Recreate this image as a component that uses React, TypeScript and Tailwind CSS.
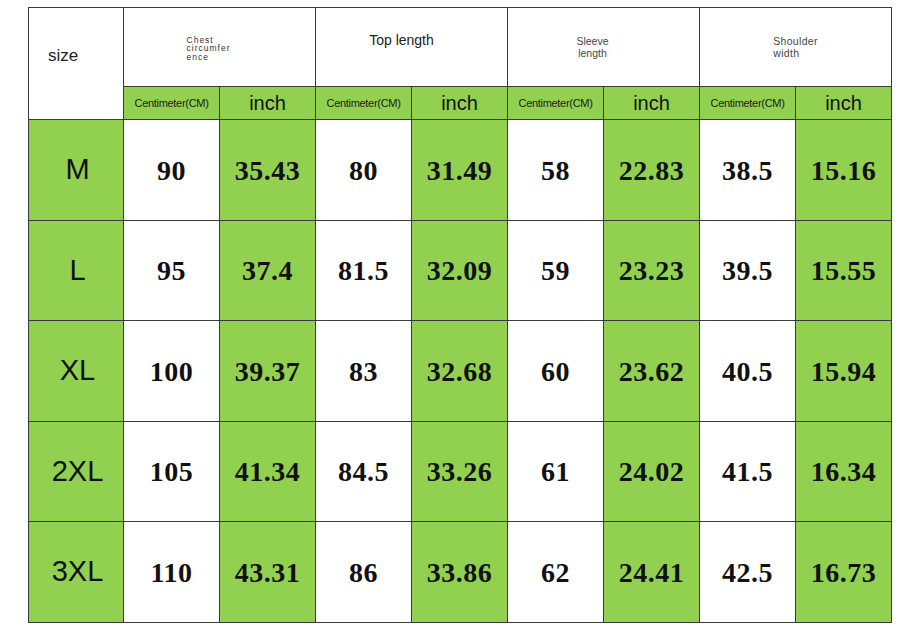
import React from "react";

const rows = [
  { size: "M", vals: ["90", "35.43", "80", "31.49", "58", "22.83", "38.5", "15.16"] },
  { size: "L", vals: ["95", "37.4", "81.5", "32.09", "59", "23.23", "39.5", "15.55"] },
  { size: "XL", vals: ["100", "39.37", "83", "32.68", "60", "23.62", "40.5", "15.94"] },
  { size: "2XL", vals: ["105", "41.34", "84.5", "33.26", "61", "24.02", "41.5", "16.34"] },
  { size: "3XL", vals: ["110", "43.31", "86", "33.86", "62", "24.41", "42.5", "16.73"] },
];

const sans = "font-['Liberation_Sans',Arial,sans-serif]";
const serif = "font-['Liberation_Serif','Times_New_Roman',serif]";

export default function App() {
  return (
    <div className="min-h-[640px] w-full bg-white pl-[28px] pt-[7px]">
      <div className="grid w-fit gap-px bg-[#3a3a3a] p-px grid-cols-[94px_repeat(8,95px)] grid-rows-[78px_32px_100px_99px_100px_99px_100px]">
        {/* header row 1 */}
        <div className={`row-span-2 bg-white flex items-center pl-[19px] pb-[16px] text-[17px] text-[#222] ${sans}`}>
          size
        </div>
        <div className={`col-span-2 bg-white flex items-center justify-center pr-[22px] pt-[3px] ${sans}`}>
          <div className="text-[8.5px] leading-[8.5px] tracking-[1px] text-[#333]">
            Chest
            <br />
            circumfer
            <br />
            ence
          </div>
        </div>
        <div className={`col-span-2 bg-white flex items-center justify-center pr-[20px] pb-[14px] text-[14px] text-[#222] ${sans}`}>
          Top length
        </div>
        <div className={`col-span-2 bg-white flex items-center justify-center pr-[22px] pb-[1px] ${sans}`}>
          <div className="text-[10.5px] leading-[12px] text-[#444] text-center">
            Sleeve
            <br />
            length
          </div>
        </div>
        <div className={`col-span-2 bg-white flex items-center justify-center pb-[1px] ${sans}`}>
          <div className="text-[10.5px] leading-[12px] tracking-[0.3px] text-[#444]">
            Shoulder
            <br />
            width
          </div>
        </div>

        {/* header row 2 */}
        {[0, 1, 2, 3].map((i) => (
          <React.Fragment key={i}>
            <div className={`bg-[#92d050] flex items-center justify-center text-[11px] tracking-[-0.3px] text-[#1a1a1a] ${sans}`}>
              Centimeter(CM)
            </div>
            <div className={`bg-[#92d050] flex items-center justify-center text-[20px] text-[#111] ${sans}`}>
              inch
            </div>
          </React.Fragment>
        ))}

        {/* data rows */}
        {rows.map((r) => (
          <React.Fragment key={r.size}>
            <div className={`bg-[#92d050] flex items-center justify-center pl-[3px] text-[29px] text-[#111] ${sans}`}>
              {r.size}
            </div>
            {r.vals.map((v, j) => (
              <div
                key={j}
                className={`${j % 2 === 1 ? "bg-[#92d050]" : "bg-white"} flex items-center justify-center pt-[1px] text-[28px] tracking-[0.5px] font-bold text-[#111] ${serif}`}
              >
                {v}
              </div>
            ))}
          </React.Fragment>
        ))}
      </div>
    </div>
  );
}
